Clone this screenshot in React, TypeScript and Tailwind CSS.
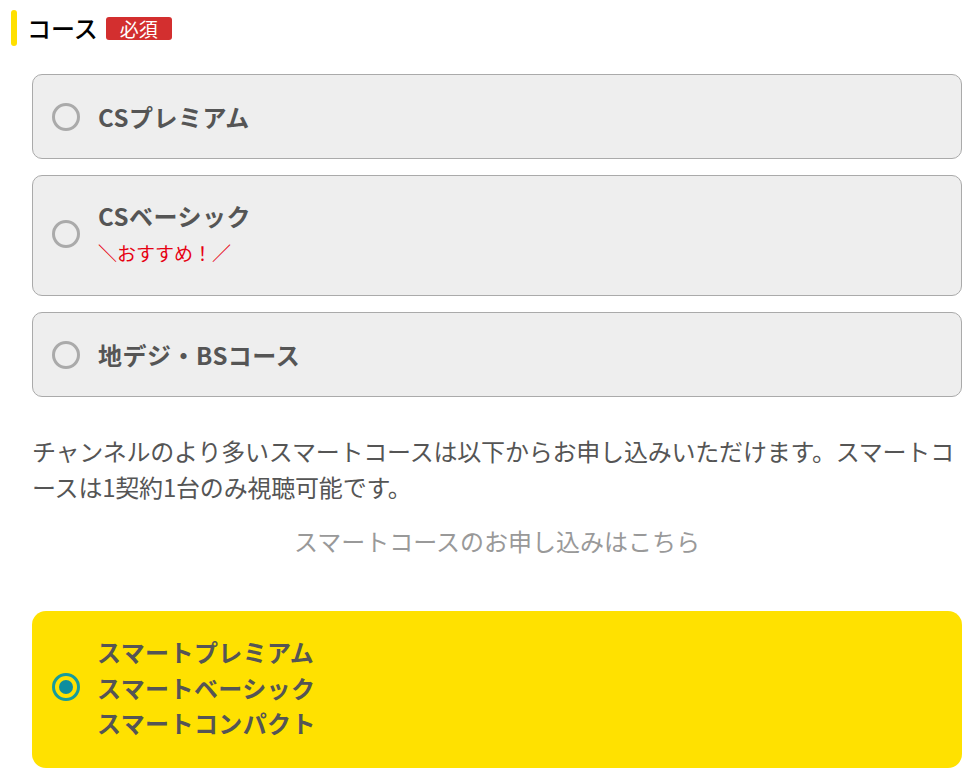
import { useState } from 'react';

// Course choices shown as radio cards
const courses = [
    { id: 'cs-premium', label: 'CSプレミアム' },
    { id: 'cs-basic', label: 'CSベーシック', note: '＼おすすめ！／' },
    { id: 'digital-bs', label: '地デジ・BSコース' },
];

const smartLines = ['スマートプレミアム', 'スマートベーシック', 'スマートコンパクト'];

const Radio = ({ checked }: { checked: boolean }) => (
    <span
        className={`flex h-[28px] w-[28px] shrink-0 items-center justify-center rounded-full border-[3px] ${checked ? 'border-[#169c9c]' : 'border-[#aaaaaa]'}`}
    >
        {checked && <span className="h-[14px] w-[14px] rounded-full bg-[#0e8e9e]"></span>}
    </span>
);

const App = () => {
    const [selected, setSelected] = useState<string>('smart'); // Currently chosen course

    return (
        <div
            className="min-h-screen bg-white pl-[11px] pr-[8px] pt-[10px] text-[#555555]"
            style={{ fontFamily: '"Noto Sans CJK JP", "Noto Sans", sans-serif' }}
        >
            {/* Section heading */}
            <div className="flex items-center">
                <span className="h-[36px] w-[6px] rounded-full bg-[#ffe000]"></span>
                <h2 className="ml-[10px] text-[24px] font-medium leading-[36px] text-black">コース</h2>
                <span className="ml-[8px] flex h-[23px] w-[66px] items-center justify-center rounded-[3px] bg-[#d32f2f] text-[19px] leading-none text-white">
                    必須
                </span>
            </div>

            <div className="ml-[21px] mt-[28px] flex flex-col gap-[16px]">
                {courses.map((c) => (
                    <button
                        key={c.id}
                        onClick={() => setSelected(c.id)}
                        className={`flex items-center rounded-[10px] border border-[#aaaaaa] bg-[#eeeeee] pl-[19px] text-left ${c.note ? 'pb-[27.5px] pt-[23.5px]' : 'py-[23.5px]'}`}
                    >
                        <Radio checked={selected === c.id} />
                        <span className="ml-[18px] flex flex-col">
                            <span className={`text-[24px] font-bold tracking-[0.5px] text-[#555555] ${c.note ? 'leading-[32px]' : 'leading-[36px]'}`}>
                                {c.label}
                            </span>
                            {c.note && (
                                <span className="mt-[6px] text-[19px] leading-[30px] text-[#e60012]">{c.note}</span>
                            )}
                        </span>
                    </button>
                ))}
            </div>

            <p className="ml-[21px] mt-[36px] text-[24px] leading-[36px] tracking-[-0.2px] text-[#555555]">
                チャンネルのより多いスマートコースは以下からお申し込みいただけます。スマートコースは1契約1台のみ視聴可能です。
            </p>

            <p className="ml-[21px] mt-[18px] text-center text-[24px] leading-[36px] text-[#999999]">
                スマートコースのお申し込みはこちら
            </p>

            <button
                onClick={() => setSelected('smart')}
                className="ml-[21px] mt-[52px] flex w-[930px] items-center rounded-[14px] bg-[#ffe100] pb-[27px] pl-[20px] pt-[23px] text-left"
            >
                <Radio checked={selected === 'smart'} />
                <span className="ml-[17px] flex flex-col">
                    {smartLines.map((line) => (
                        <span key={line} className="text-[24px] font-bold leading-[35.5px] tracking-[0.4px] text-[#555555]">
                            {line}
                        </span>
                    ))}
                </span>
            </button>
        </div>
    );
};

export default App;
